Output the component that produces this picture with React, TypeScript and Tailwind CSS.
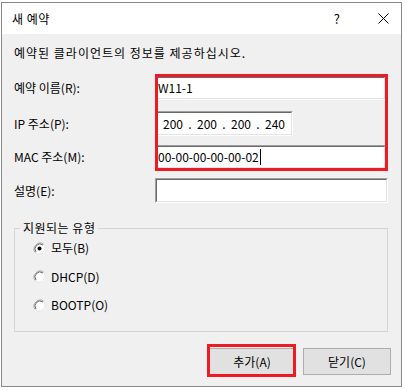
import type { ReactNode } from "react";

const Sunken = ({ className, children }: { className: string; children?: ReactNode }) => (
  <div
    className={`border border-t-[#a0a0a0] border-l-[#a0a0a0] border-b-white border-r-white ${className}`}
  >
    <div className="h-full w-full border border-t-[#696969] border-l-[#696969] border-b-[#e3e3e3] border-r-[#e3e3e3] bg-white flex items-center text-[12px] text-black">
      {children}
    </div>
  </div>
);

const Radio = ({ checked, label }: { checked?: boolean; label: string }) => (
  <div className="flex items-center h-[16px]">
    <svg width="13" height="13" viewBox="0 0 13 13" className="ml-[18px]">
      <circle cx="6.5" cy="6.5" r="6" fill="#fff" />
      <path d="M2.3 10.7 A6 6 0 0 1 10.7 2.3" fill="none" stroke="#a0a0a0" strokeWidth="1" />
      <path d="M3 10 A5 5 0 0 1 10 3" fill="none" stroke="#696969" strokeWidth="1" />
      <path d="M10.7 2.3 A6 6 0 0 1 2.3 10.7" fill="none" stroke="#e3e3e3" strokeWidth="1" />
      {checked && <circle cx="6.5" cy="6.5" r="2" fill="#000" />}
    </svg>
    <span className="ml-[5px] text-[12px] text-black">{label}</span>
  </div>
);

const Button = ({ label }: { label: string }) => (
  <div className="w-[88px] h-[27px] border border-[#adadad] bg-[#e1e1e1] flex items-center justify-center text-[12px] text-black">
    {label}
  </div>
);

const App = () => {
  return (
    <div className="relative w-[405px] h-[390px] bg-white font-['Noto_Sans_CJK_KR',sans-serif] leading-[16px] overflow-hidden">
      <div className="ml-[1px] mt-[2px] w-[401px] h-[385px] border border-[#8a8a8a] bg-[#f0f0f0] flex flex-col">
        <div className="h-[31px] bg-white flex items-center pl-[10px] pr-[12px] text-[12px] text-black">
          <span className="tracking-[0.5px]">새 예약</span>
          <span className="ml-auto mr-[38px] text-[13px]">?</span>
          <svg width="11" height="11" viewBox="0 0 11 11">
            <path d="M0.5 0.5 L10.5 10.5 M10.5 0.5 L0.5 10.5" stroke="#000" strokeWidth="1" />
          </svg>
        </div>

        <div className="pl-[12px] flex flex-col text-[12px] text-black">
          <p className="mt-[11px] tracking-[1px]">예약된 클라이언트의 정보를 제공하십시오.</p>

          <div className="mt-[15px] flex items-center">
            <span className="w-[141px]">예약 이름(R):</span>
            <Sunken className="w-[231px] h-[24px]">
              <span className="pl-[1px]">W11-1</span>
            </Sunken>
          </div>

          <div className="mt-[11px] flex items-center">
            <span className="w-[141px]">IP 주소(P):</span>
            <Sunken className="w-[138px] h-[25px]">
              <div className="flex pl-[6px]">
                <span className="w-[20px]">200</span>
                <span className="w-[14px] text-center">.</span>
                <span className="w-[20px]">200</span>
                <span className="w-[14px] text-center">.</span>
                <span className="w-[20px]">200</span>
                <span className="w-[14px] text-center">.</span>
                <span className="w-[20px]">240</span>
              </div>
            </Sunken>
          </div>

          <div className="mt-[9px] flex items-center">
            <span className="w-[141px]">MAC 주소(M):</span>
            <Sunken className="w-[231px] h-[24px]">
              <span className="pl-[1px]">00-00-00-00-00-02</span>
              <span className="ml-[1px] w-[1px] h-[16px] bg-black" />
            </Sunken>
          </div>

          <div className="mt-[9px] flex items-center">
            <span className="w-[141px]">설명(E):</span>
            <Sunken className="w-[233px] h-[25px]" />
          </div>

          <fieldset className="mt-[17px] w-[374px] h-[112px] border border-[#d5d5d5]">
            <legend className="ml-[5px] px-[3px] text-[12px] tracking-[0.5px]">지원되는 유형</legend>
            <div className="flex flex-col gap-[12.5px] mt-[4px]">
              <Radio checked label="모두(B)" />
              <Radio label="DHCP(D)" />
              <Radio label="BOOTP(O)" />
            </div>
          </fieldset>

          <div className="mt-[16px] flex justify-end gap-[7px] pr-[10px]">
            <Button label="추가(A)" />
            <Button label="닫기(C)" />
          </div>
        </div>
      </div>

      <div className="absolute left-[155px] top-[74px] w-[233px] h-[97px] border-[3px] border-[#ed1c24]" />
      <div className="absolute left-[207px] top-[344px] w-[89px] h-[33px] border-[3px] border-[#ed1c24]" />
    </div>
  );
};

export default App;
